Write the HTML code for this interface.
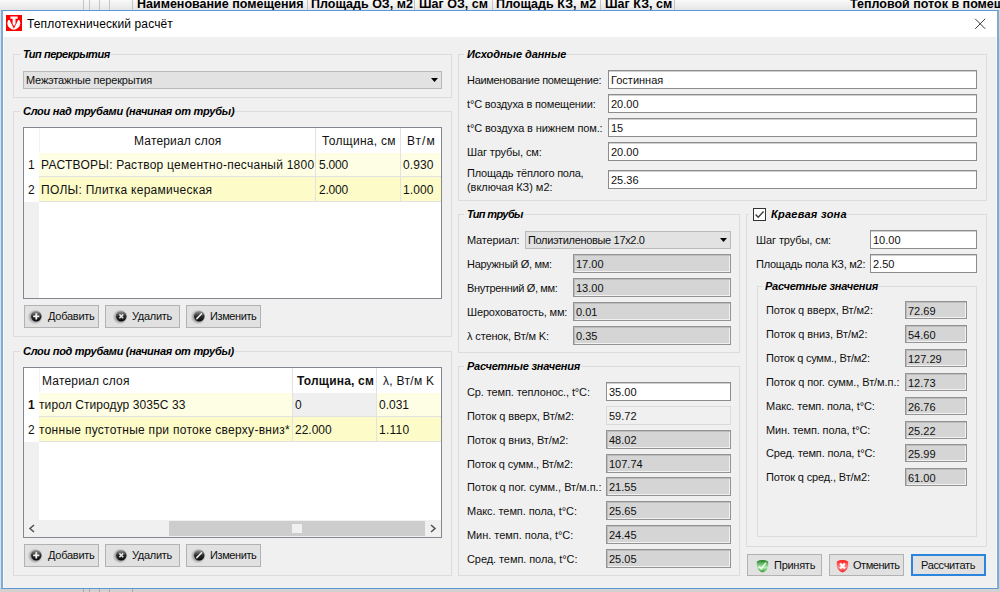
<!DOCTYPE html><html><head><meta charset="utf-8"><title>Теплотехнический расчёт</title><style>
*{margin:0;padding:0;box-sizing:border-box}
html,body{width:1000px;height:592px;overflow:hidden;background:#f4f4f4;font-family:"Liberation Sans",sans-serif;color:#000}
div,svg{position:absolute}
.t,.iv,.gt,.tt,.bt{white-space:pre;font-size:11px;line-height:13px;color:#101010}
.grp{border:1px solid #dcdcdc}
.gtb{height:3px;background:#f0f0f0}
.gt{font-weight:bold;font-style:italic;color:#000}
.in{border:1px solid #8c8c8c;background:#fff;box-shadow:inset 0 1px 0 #cfcfcf}
.in.g{background:#d5d5d5;border-color:#939393;box-shadow:inset 1px 1px 0 #bcbcbc,inset -1px -1px 0 #f2f2f2}
.in.f{background:#f0f0f0;border-color:#dadada;box-shadow:none}
.btn{border:1px solid #b2b2b2;background:#e1e1e1}
.tbl{background:#fff;border:1px solid #828790;overflow:hidden}
.tt{font-size:12px;line-height:14px;color:#111}
</style></head><body>
<div style="left:0px;top:0px;width:1000px;height:10px;background:linear-gradient(#f9f9f9,#e6e6e6)"></div>
<div style="left:83px;top:0px;width:1px;height:10px;background:#c4c4c4"></div>
<div style="left:89px;top:0px;width:1px;height:10px;background:#c4c4c4"></div>
<div style="left:99px;top:0px;width:1px;height:10px;background:#c4c4c4"></div>
<div style="left:109px;top:0px;width:1px;height:10px;background:#c4c4c4"></div>
<div style="left:132px;top:0px;width:1px;height:10px;background:#c4c4c4"></div>
<div style="left:307px;top:0px;width:1px;height:10px;background:#c4c4c4"></div>
<div style="left:414px;top:0px;width:1px;height:10px;background:#c4c4c4"></div>
<div style="left:492px;top:0px;width:1px;height:10px;background:#c4c4c4"></div>
<div style="left:600px;top:0px;width:1px;height:10px;background:#c4c4c4"></div>
<div style="left:674px;top:0px;width:1px;height:10px;background:#c4c4c4"></div>
<div class="t" style="left:137px;top:-3px;font-weight:bold;font-size:12.5px;line-height:14px;color:#000">Наименование помещения</div>
<div class="t" style="left:311px;top:-3px;font-weight:bold;font-size:12.5px;line-height:14px;color:#000">Площадь ОЗ, м2</div>
<div class="t" style="left:419px;top:-3px;font-weight:bold;font-size:12.5px;line-height:14px;color:#000">Шаг ОЗ, см</div>
<div class="t" style="left:496px;top:-3px;font-weight:bold;font-size:12.5px;line-height:14px;color:#000">Площадь КЗ, м2</div>
<div class="t" style="left:605px;top:-3px;font-weight:bold;font-size:12.5px;line-height:14px;color:#000">Шаг КЗ, см</div>
<div class="t" style="left:850px;top:-3px;font-weight:bold;font-size:12.5px;line-height:14px;color:#000">Тепловой поток в помещ</div>
<div style="left:0px;top:588px;width:1000px;height:4px;background:#d4d2d0"></div>
<div style="left:83px;top:588px;width:1px;height:4px;background:#a8a8a8"></div>
<div style="left:89px;top:588px;width:1px;height:4px;background:#a8a8a8"></div>
<div style="left:99px;top:588px;width:1px;height:4px;background:#a8a8a8"></div>
<div style="left:109px;top:588px;width:1px;height:4px;background:#a8a8a8"></div>
<div style="left:132px;top:588px;width:1px;height:4px;background:#a8a8a8"></div>
<div style="left:998px;top:10px;width:2px;height:29px;background:#dcd8b6"></div>
<div style="left:998px;top:39px;width:2px;height:549px;background:#d2cec9"></div>
<div style="left:0px;top:10px;width:1px;height:578px;background:#e6e0da"></div>
<div style="left:1px;top:10px;width:998px;height:579px;border:1px solid #5a9ad8;border-left:2px solid #78ade0;border-right:2px solid #78ade0;background:#f0f0f0"></div>
<div style="left:3px;top:11px;width:994px;height:577px;border-left:1px solid #fbf7f3;border-right:1px solid #fbf7f3"></div>
<div style="left:3px;top:11px;width:994px;height:26px;background:#fff"></div>
<svg style="left:6px;top:15px" width="16" height="16" viewBox="0 0 16 16">
<rect width="16" height="16" fill="#f00"/>
<path d="M2.4 4.9 A6.3 6.3 0 1 0 13.2 4.9 Z" fill="#fff"/>
<path d="M3.6 4.9 H12.1 L7.9 13.7 Z" fill="#f00"/>
<path d="M4.4 1.5 H11.6 V3.7 H9.5 V9 L8 11 L6.6 9 V3.7 H4.4 Z" fill="#fff"/>
</svg>
<div id="ke74d8d" class="tt" style="left:27px;top:17px;font-size:12px;color:#000;letter-spacing:0.127px">Теплотехнический расчёт</div>
<svg style="left:974px;top:18px" width="12" height="12" viewBox="0 0 12 12"><path d="M1.2 0.8 L11.2 10.8 M11.2 0.8 L1.2 10.8" stroke="#3a3a3a" stroke-width="1"/></svg>
<div class="grp" style="left:13px;top:54px;width:439px;height:44px;"></div>
<div class="gtb" style="left:20px;top:53px;width:91px"></div>
<div id="k6bc1bb" class="gt" style="left:23px;top:48px;;letter-spacing:-0.462px">Тип перекрытия</div>
<div style="left:23px;top:71px;width:419px;height:18px;border:1px solid #bababa;background:#e2e2e2"></div>
<div id="k28e221" class="t" style="left:26px;top:74px;;letter-spacing:-0.180px">Межэтажные перекрытия</div>
<svg style="left:431px;top:78px" width="7" height="4" viewBox="0 0 7 4"><path d="M0 0H7L3.5 4Z" fill="#000"/></svg>
<div class="grp" style="left:13px;top:111px;width:439px;height:226px;"></div>
<div class="gtb" style="left:20px;top:110px;width:214.7px"></div>
<div id="k5b7f88" class="gt" style="left:23px;top:105px;;letter-spacing:-0.259px">Слои над трубами (начиная от трубы)</div>
<div class="tbl" style="left:23px;top:127px;width:419px;height:172px">
<div style="left:0;top:0;width:15px;height:170px;background:#f0f0f0"></div>
<div style="left:0;top:0;width:15px;height:74px;background:#fff"></div>
<div style="left:15px;top:25px;width:402px;height:24px;background:#fefee4"></div>
<div style="left:15px;top:49px;width:402px;height:24px;background:#fdfcc9"></div>
<div style="left:15px;top:48px;width:402px;height:1px;background:#e2e2e2"></div>
<div style="left:15px;top:73px;width:402px;height:1px;background:#e2e2e2"></div>
<div style="left:291px;top:0;width:1px;height:74px;background:#e2e2e2"></div>
<div style="left:376px;top:0;width:1px;height:74px;background:#e2e2e2"></div>
<div style="left:15px;top:0;width:1px;height:24px;background:#f2f2f2"></div>
</div>
<div id="k1540a9" class="tt" style="left:134px;top:134px;;letter-spacing:0.167px">Материал слоя</div>
<div id="k88fd57" class="tt" style="left:322px;top:134px;;letter-spacing:0.300px">Толщина, см</div>
<div id="kd38a46" class="tt" style="left:407px;top:134px;;letter-spacing:1.000px">Вт/м</div>
<div id="k90240e" class="tt" style="left:28px;top:158px;">1</div>
<div id="kb71681" class="tt" style="left:41px;top:158px;;letter-spacing:0.256px">РАСТВОРЫ: Раствор цементно-песчаный 1800</div>
<div id="kc75a88" class="tt" style="left:319px;top:158px;;letter-spacing:-0.200px">5.000</div>
<div id="k4865a7" class="tt" style="left:403px;top:158px;;letter-spacing:0.100px">0.930</div>
<div id="k190552" class="tt" style="left:28px;top:183px;">2</div>
<div id="k65adaa" class="tt" style="left:41px;top:183px;;letter-spacing:0.283px">ПОЛЫ: Плитка керамическая</div>
<div id="ka1c100" class="tt" style="left:319px;top:183px;;letter-spacing:-0.200px">2.000</div>
<div id="k56da7d" class="tt" style="left:403px;top:183px;;letter-spacing:0.100px">1.000</div>
<div class="btn" style="left:24px;top:305px;width:75px;height:23px"><svg style="left:3px;top:3px" width="16" height="16" viewBox="0 0 16 16"><defs><linearGradient id="dg" x1="0" y1="0" x2="0" y2="1"><stop offset="0" stop-color="#9a9a9a"/><stop offset=".5" stop-color="#2a2a2a"/><stop offset="1" stop-color="#0a0a0a"/></linearGradient><radialGradient id="hg"><stop offset=".55" stop-color="#5a5a5a" stop-opacity=".6"/><stop offset="1" stop-color="#808080" stop-opacity="0"/></radialGradient></defs><circle cx="7.2" cy="7.9" r="7.6" fill="url(#hg)"/><circle cx="8.3" cy="7.3" r="5.2" fill="url(#dg)"/><path d="M8.3 4.2V10.4M5.2 7.3H11.4" stroke="#f4f4f4" stroke-width="1.8"/></svg></div>
<div class="btn" style="left:105px;top:305px;width:75px;height:23px"><svg style="left:6.7px;top:3px" width="16" height="16" viewBox="0 0 16 16"><circle cx="7.2" cy="7.9" r="7.6" fill="url(#hg)"/><circle cx="8.3" cy="7.3" r="5.2" fill="url(#dg)"/><path d="M6.4 5.4L10.2 9.2M10.2 5.4L6.4 9.2" stroke="#e8e8e8" stroke-width="1.5"/></svg></div>
<div class="btn" style="left:186px;top:305px;width:75px;height:23px"><svg style="left:3.5px;top:3px" width="16" height="16" viewBox="0 0 16 16"><circle cx="7.2" cy="7.9" r="7.6" fill="url(#hg)"/><circle cx="8.3" cy="7.3" r="5.2" fill="url(#dg)"/><path d="M5.8 9.6L10.6 4.8" stroke="#f0f0f0" stroke-width="1.5" stroke-linecap="round"/></svg></div>
<div id="k5d8180" class="bt" style="left:48px;top:310px;;letter-spacing:-0.257px">Добавить</div>
<div id="k0e627c" class="bt" style="left:132px;top:310px;;letter-spacing:-0.300px">Удалить</div>
<div id="kd53591" class="bt" style="left:210px;top:310px;;letter-spacing:-0.400px">Изменить</div>
<div class="grp" style="left:13px;top:351px;width:439px;height:225px;"></div>
<div class="gtb" style="left:20px;top:350px;width:214.7px"></div>
<div id="k9a1b68" class="gt" style="left:23px;top:345px;;letter-spacing:-0.288px">Слои под трубами (начиная от трубы)</div>
<div class="tbl" style="left:23px;top:367px;width:419px;height:171px">
<div style="left:0;top:0;width:15px;height:169px;background:#f0f0f0"></div>
<div style="left:0;top:0;width:15px;height:74px;background:#fff"></div>
<div style="left:15px;top:25px;width:402px;height:24px;background:#fefee4"></div>
<div style="left:15px;top:49px;width:402px;height:24px;background:#fdfcc9"></div>
<div style="left:268px;top:25px;width:84px;height:24px;background:#efefef"></div>
<div style="left:15px;top:48px;width:402px;height:1px;background:#e2e2e2"></div>
<div style="left:15px;top:73px;width:402px;height:1px;background:#e2e2e2"></div>
<div style="left:268px;top:0;width:1px;height:74px;background:#e2e2e2"></div>
<div style="left:352px;top:0;width:1px;height:74px;background:#e2e2e2"></div>
<div style="left:15px;top:0;width:1px;height:24px;background:#f2f2f2"></div>
<div style="left:0;top:152px;width:417px;height:17px;background:#f0f0f0"></div>
<div style="left:145px;top:153px;width:256px;height:15px;background:#cdcdcd"></div>
<div style="left:268px;top:156px;width:10px;height:9px;background:#f0f0f0"></div>
</div>
<svg style="left:28px;top:524px" width="8" height="9" viewBox="0 0 8 9"><path d="M6 1L2 4.5L6 8" stroke="#505050" stroke-width="1.5" fill="none"/></svg>
<svg style="left:429px;top:524px" width="8" height="9" viewBox="0 0 8 9"><path d="M2 1L6 4.5L2 8" stroke="#505050" stroke-width="1.5" fill="none"/></svg>
<div id="k3ea7ed" class="tt" style="left:42px;top:374px;;letter-spacing:0.183px">Материал слоя</div>
<div id="kcb04f9" class="tt" style="left:297px;top:374px;font-weight:bold;letter-spacing:0.200px">Толщина, см</div>
<div id="k624686" class="tt" style="left:383px;top:374px;;letter-spacing:0.300px">λ, Вт/м K</div>
<div id="k525d4d" class="tt" style="left:28px;top:398px;font-weight:bold">1</div>
<div id="k9f36fb" class="tt" style="left:39px;top:398px;;letter-spacing:0.091px">тирол Стиродур 3035С 33</div>
<div id="k8c3f0a" class="tt" style="left:295px;top:398px;">0</div>
<div id="k7decfd" class="tt" style="left:379px;top:398px;;letter-spacing:0.000px">0.031</div>
<div id="kb1efd1" class="tt" style="left:28px;top:423px;">2</div>
<div id="k69c45d" class="tt" style="left:39px;top:423px;;letter-spacing:0.282px">тонные пустотные при потоке сверху-вниз*</div>
<div id="kfc1ac2" class="tt" style="left:295px;top:423px;;letter-spacing:0.000px">22.000</div>
<div id="ke1943c" class="tt" style="left:379px;top:423px;;letter-spacing:0.250px">1.110</div>
<div class="btn" style="left:24px;top:544px;width:75px;height:23px"><svg style="left:3px;top:3px" width="16" height="16" viewBox="0 0 16 16"><defs><linearGradient id="dg" x1="0" y1="0" x2="0" y2="1"><stop offset="0" stop-color="#9a9a9a"/><stop offset=".5" stop-color="#2a2a2a"/><stop offset="1" stop-color="#0a0a0a"/></linearGradient><radialGradient id="hg"><stop offset=".55" stop-color="#5a5a5a" stop-opacity=".6"/><stop offset="1" stop-color="#808080" stop-opacity="0"/></radialGradient></defs><circle cx="7.2" cy="7.9" r="7.6" fill="url(#hg)"/><circle cx="8.3" cy="7.3" r="5.2" fill="url(#dg)"/><path d="M8.3 4.2V10.4M5.2 7.3H11.4" stroke="#f4f4f4" stroke-width="1.8"/></svg></div>
<div class="btn" style="left:105px;top:544px;width:75px;height:23px"><svg style="left:6.7px;top:3px" width="16" height="16" viewBox="0 0 16 16"><circle cx="7.2" cy="7.9" r="7.6" fill="url(#hg)"/><circle cx="8.3" cy="7.3" r="5.2" fill="url(#dg)"/><path d="M6.4 5.4L10.2 9.2M10.2 5.4L6.4 9.2" stroke="#e8e8e8" stroke-width="1.5"/></svg></div>
<div class="btn" style="left:186px;top:544px;width:75px;height:23px"><svg style="left:3.5px;top:3px" width="16" height="16" viewBox="0 0 16 16"><circle cx="7.2" cy="7.9" r="7.6" fill="url(#hg)"/><circle cx="8.3" cy="7.3" r="5.2" fill="url(#dg)"/><path d="M5.8 9.6L10.6 4.8" stroke="#f0f0f0" stroke-width="1.5" stroke-linecap="round"/></svg></div>
<div id="k95f2f7" class="bt" style="left:48px;top:549px;;letter-spacing:-0.257px">Добавить</div>
<div id="k9baeb9" class="bt" style="left:132px;top:549px;;letter-spacing:-0.300px">Удалить</div>
<div id="kb32e95" class="bt" style="left:210px;top:549px;;letter-spacing:-0.400px">Изменить</div>
<div class="grp" style="left:458px;top:54px;width:529px;height:147px;"></div>
<div class="gtb" style="left:464px;top:53px;width:103.20000000000005px"></div>
<div id="k36e54b" class="gt" style="left:467px;top:48px;;letter-spacing:-0.057px">Исходные данные</div>
<div id="kff3372" class="t" style="left:467px;top:74px;;letter-spacing:-0.318px">Наименование помещение:</div>
<div class="in w" style="left:608px;top:70px;width:369px;height:19px;"></div>
<div id="kd96335" class="iv" style="left:611px;top:74px;">Гостинная</div>
<div id="k336d64" class="t" style="left:467px;top:98px;;letter-spacing:-0.165px">t°C воздуха в помещении:</div>
<div class="in w" style="left:608px;top:94px;width:369px;height:19px;"></div>
<div id="k701914" class="iv" style="left:611px;top:98px;">20.00</div>
<div id="k776026" class="t" style="left:467px;top:122px;;letter-spacing:-0.112px">t°C воздуха в нижнем пом.:</div>
<div class="in w" style="left:608px;top:118px;width:369px;height:19px;"></div>
<div id="ka72ebb" class="iv" style="left:611px;top:122px;">15</div>
<div id="k9f8c18" class="t" style="left:467px;top:146px;;letter-spacing:-0.123px">Шаг трубы, см:</div>
<div class="in w" style="left:608px;top:142px;width:369px;height:19px;"></div>
<div id="k82313b" class="iv" style="left:611px;top:146px;">20.00</div>
<div id="k0d0022" class="t" style="left:467px;top:167px;;letter-spacing:-0.220px">Площадь тёплого пола,</div>
<div id="kfc7512" class="t" style="left:467px;top:181px;;letter-spacing:-0.040px">(включая КЗ) м2:</div>
<div class="in w" style="left:608px;top:170px;width:369px;height:19px;"></div>
<div id="k987474" class="iv" style="left:611px;top:174px;">25.36</div>
<div class="grp" style="left:458px;top:214px;width:282px;height:139px;"></div>
<div class="gtb" style="left:464px;top:213px;width:59.5px"></div>
<div id="k1626e3" class="gt" style="left:467px;top:208px;;letter-spacing:-0.625px">Тип трубы</div>
<div id="k42096c" class="t" style="left:467px;top:234px;;letter-spacing:-0.175px">Материал:</div>
<div style="left:525px;top:231px;width:206px;height:18px;border:1px solid #bababa;background:#e2e2e2"></div>
<div id="kc50a8c" class="t" style="left:528px;top:234px;;letter-spacing:-0.330px">Полиэтиленовые 17x2.0</div>
<svg style="left:720px;top:238px" width="7" height="4" viewBox="0 0 7 4"><path d="M0 0H7L3.5 4Z" fill="#000"/></svg>
<div id="ka39d1c" class="t" style="left:467px;top:258px;;letter-spacing:-0.286px">Наружный Ø, мм:</div>
<div class="in g" style="left:573px;top:254px;width:158px;height:19px;"></div>
<div id="kcf2fe3" class="iv" style="left:576px;top:258px;">17.00</div>
<div id="k588774" class="t" style="left:467px;top:282px;;letter-spacing:-0.362px">Внутренний Ø, мм:</div>
<div class="in g" style="left:573px;top:278px;width:158px;height:19px;"></div>
<div id="k11e9ab" class="iv" style="left:576px;top:282px;">13.00</div>
<div id="k5587d7" class="t" style="left:467px;top:306px;;letter-spacing:-0.153px">Шероховатость, мм:</div>
<div class="in g" style="left:573px;top:302px;width:158px;height:19px;"></div>
<div id="k7c364c" class="iv" style="left:576px;top:306px;">0.01</div>
<div id="ka4d20f" class="t" style="left:467px;top:330px;;letter-spacing:-0.138px">λ стенок, Вт/м K:</div>
<div class="in g" style="left:573px;top:326px;width:158px;height:19px;"></div>
<div id="k711a1d" class="iv" style="left:576px;top:330px;">0.35</div>
<div class="grp" style="left:458px;top:366px;width:282px;height:210px;"></div>
<div class="gtb" style="left:464px;top:365px;width:117.20000000000005px"></div>
<div id="k63c11e" class="gt" style="left:467px;top:360px;;letter-spacing:-0.224px">Расчетные значения</div>
<div id="kbcb2ce" class="t" style="left:467px;top:386px;;letter-spacing:-0.117px">Ср. темп. теплонос., t°C:</div>
<div class="in w" style="left:606px;top:382px;width:125px;height:19px;"></div>
<div id="k050537" class="iv" style="left:609px;top:386px;">35.00</div>
<div id="k74fc99" class="t" style="left:467px;top:410px;;letter-spacing:-0.090px">Поток q вверх, Вт/м2:</div>
<div class="in f" style="left:606px;top:406px;width:125px;height:19px;"></div>
<div id="k35411e" class="iv" style="left:609px;top:410px;">59.72</div>
<div id="kc090db" class="t" style="left:467px;top:434px;;letter-spacing:-0.084px">Поток q вниз, Вт/м2:</div>
<div class="in g" style="left:606px;top:430px;width:125px;height:19px;"></div>
<div id="k2c57c6" class="iv" style="left:609px;top:434px;">48.02</div>
<div id="ka33d6f" class="t" style="left:467px;top:458px;;letter-spacing:-0.140px">Поток q сумм., Вт/м2:</div>
<div class="in g" style="left:606px;top:454px;width:125px;height:19px;"></div>
<div id="kb8b30a" class="iv" style="left:609px;top:458px;">107.74</div>
<div id="ka246d3" class="t" style="left:467px;top:481px;;letter-spacing:-0.037px">Поток q пог. сумм., Вт/м.п.:</div>
<div class="in g" style="left:606px;top:477px;width:125px;height:19px;"></div>
<div id="k2b3f41" class="iv" style="left:609px;top:481px;">21.55</div>
<div id="k4bf157" class="t" style="left:467px;top:505px;;letter-spacing:-0.076px">Макс. темп. пола, t°C:</div>
<div class="in g" style="left:606px;top:501px;width:125px;height:19px;"></div>
<div id="k4a2c68" class="iv" style="left:609px;top:505px;">25.65</div>
<div id="kc9d47a" class="t" style="left:467px;top:529px;;letter-spacing:-0.040px">Мин. темп. пола, t°C:</div>
<div class="in g" style="left:606px;top:525px;width:125px;height:19px;"></div>
<div id="k513b7b" class="iv" style="left:609px;top:529px;">24.45</div>
<div id="k221609" class="t" style="left:467px;top:553px;;letter-spacing:-0.076px">Сред. темп. пола, t°C:</div>
<div class="in g" style="left:606px;top:549px;width:125px;height:19px;"></div>
<div id="k70eb8e" class="iv" style="left:609px;top:553px;">25.05</div>
<div class="grp" style="left:746px;top:214px;width:241px;height:333px;"></div>
<div class="gtb" style="left:749px;top:213px;width:97px"></div>
<div style="left:753px;top:208px;width:13px;height:13px;border:1px solid #333;background:#fff"></div>
<svg style="left:754px;top:209px" width="11" height="11" viewBox="0 0 11 11"><path d="M1.6 5.6L4.2 8.2L9.6 2.4" stroke="#3a3a3a" stroke-width="1.4" fill="none"/></svg>
<div id="kdf9f0d" class="gt" style="left:771px;top:208px;;letter-spacing:0.255px">Краевая зона</div>
<div id="k18cbfa" class="t" style="left:756px;top:234px;;letter-spacing:-0.092px">Шаг трубы, см:</div>
<div class="in w" style="left:870px;top:230px;width:107px;height:19px;"></div>
<div id="k34921e" class="iv" style="left:873px;top:234px;">10.00</div>
<div id="k5463bf" class="t" style="left:756px;top:258px;;letter-spacing:-0.242px">Площадь пола КЗ, м2:</div>
<div class="in w" style="left:870px;top:254px;width:107px;height:19px;"></div>
<div id="k8ebe06" class="iv" style="left:873px;top:258px;">2.50</div>
<div class="grp" style="left:757px;top:286px;width:220px;height:251px;"></div>
<div class="gtb" style="left:762px;top:285px;width:117.20000000000005px"></div>
<div id="kfe6cd3" class="gt" style="left:765px;top:280px;;letter-spacing:-0.224px">Расчетные значения</div>
<div id="k949b68" class="t" style="left:766px;top:304px;;letter-spacing:-0.100px">Поток q вверх, Вт/м2:</div>
<div class="in g" style="left:905px;top:301px;width:62px;height:18px;"></div>
<div id="k69d16a" class="iv" style="left:908px;top:305px;">72.69</div>
<div id="k262067" class="t" style="left:766px;top:328px;;letter-spacing:-0.074px">Поток q вниз, Вт/м2:</div>
<div class="in g" style="left:905px;top:325px;width:62px;height:18px;"></div>
<div id="k7b1c77" class="iv" style="left:908px;top:329px;">54.60</div>
<div id="k06ca95" class="t" style="left:766px;top:352px;;letter-spacing:-0.240px">Поток q сумм., Вт/м2:</div>
<div class="in g" style="left:905px;top:349px;width:62px;height:18px;"></div>
<div id="k05ca24" class="iv" style="left:908px;top:353px;">127.29</div>
<div id="k40db8b" class="t" style="left:766px;top:376px;;letter-spacing:-0.081px">Поток q пог. сумм., Вт/м.п.:</div>
<div class="in g" style="left:905px;top:373px;width:62px;height:18px;"></div>
<div id="kdd656e" class="iv" style="left:908px;top:377px;">12.73</div>
<div id="k5a2e00" class="t" style="left:766px;top:400px;;letter-spacing:-0.133px">Макс. темп. пола, t°C:</div>
<div class="in g" style="left:905px;top:397px;width:62px;height:18px;"></div>
<div id="k744d37" class="iv" style="left:908px;top:401px;">26.76</div>
<div id="k6f38e3" class="t" style="left:766px;top:424px;;letter-spacing:-0.140px">Мин. темп. пола, t°C:</div>
<div class="in g" style="left:905px;top:421px;width:62px;height:18px;"></div>
<div id="k43e5e2" class="iv" style="left:908px;top:425px;">25.22</div>
<div id="k12f03a" class="t" style="left:766px;top:447px;;letter-spacing:-0.133px">Сред. темп. пола, t°C:</div>
<div class="in g" style="left:905px;top:444px;width:62px;height:18px;"></div>
<div id="ked5e17" class="iv" style="left:908px;top:448px;">25.99</div>
<div id="k1a700f" class="t" style="left:766px;top:471px;;letter-spacing:-0.140px">Поток q сред., Вт/м2:</div>
<div class="in g" style="left:905px;top:468px;width:62px;height:18px;"></div>
<div id="k365d30" class="iv" style="left:908px;top:472px;">61.00</div>
<div class="btn" style="left:747px;top:554px;width:75px;height:22px"><svg style="left:8px;top:4px" width="13" height="14" viewBox="0 0 13 14"><defs><linearGradient id="gg" x1="0" y1="0" x2="0" y2="1"><stop offset="0" stop-color="#1f7f1f"/><stop offset=".6" stop-color="#b4eeb4"/><stop offset="1" stop-color="#2c9a2c"/></linearGradient></defs><path d="M0.8 2.4Q6.5 -0.4 12.2 2.4V6.8C12.2 10 9.6 12.6 6.5 13.4C3.4 12.6 0.8 10 0.8 6.8Z" fill="url(#gg)"/><path d="M3.2 7.6L5.2 9.9L10 3.6" stroke="#fafafa" stroke-width="1.4" fill="none"/></svg></div>
<div class="btn" style="left:829px;top:554px;width:75px;height:22px"><svg style="left:6px;top:4px" width="13" height="14" viewBox="0 0 13 14"><defs><linearGradient id="rg" x1="0" y1="0" x2="0" y2="1"><stop offset="0" stop-color="#ff1a1a"/><stop offset=".6" stop-color="#ff8a8a"/><stop offset="1" stop-color="#ee1c1c"/></linearGradient></defs><path d="M0.8 2.4Q6.5 -0.4 12.2 2.4V6.8C12.2 10 9.6 12.6 6.5 13.4C3.4 12.6 0.8 10 0.8 6.8Z" fill="url(#rg)"/><path d="M4.1 4.4L8.9 9.6M8.9 4.4L4.1 9.6" stroke="#fff" stroke-width="2.2"/></svg></div>
<div class="btn" style="left:911px;top:554px;width:75px;height:22px;border:2px solid #2a86dd"></div>
<div id="kbeb4a9" class="bt" style="left:774px;top:559px;;letter-spacing:-0.267px">Принять</div>
<div id="kc8ccc7" class="bt" style="left:853px;top:559px;;letter-spacing:-0.457px">Отменить</div>
<div id="kfdce9e" class="bt" style="left:921px;top:559px;;letter-spacing:-0.333px">Рассчитать</div>
</body></html>
